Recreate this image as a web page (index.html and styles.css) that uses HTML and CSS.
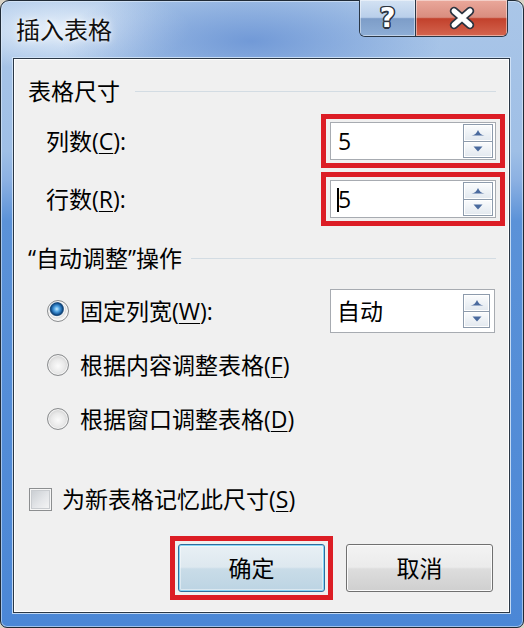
FILE: index.html
```html
<!DOCTYPE html>
<html lang="zh-CN">
<head>
<meta charset="utf-8">
<title>插入表格</title>
<link rel="stylesheet" href="styles.css">
</head>
<body>
<div class="window">
  <div class="titlebar">
    <div class="title">插入表格</div>
    <div class="caption-buttons">
      <div class="cap-btn help"><span class="help-glyph">?</span></div>
      <div class="cap-btn close">
        <svg class="close-icon" width="30" height="24" viewBox="0 0 30 24">
          <path d="M7 5 L23 19 M23 5 L7 19" stroke="#2b3440" stroke-width="8.5" stroke-linecap="round" fill="none"/>
          <path d="M7 5 L23 19 M23 5 L7 19" stroke="#ffffff" stroke-width="5" stroke-linecap="round" fill="none"/>
        </svg>
      </div>
    </div>
  </div>
  <div class="panel">
    <div class="group-head"><span>表格尺寸</span><i class="rule"></i></div>

    <div class="field-row first">
      <span class="label">列数(<u>C</u>):</span>
      <div class="mark">
        <div class="spin-field">
          <span class="value">5</span>
          <div class="spinner">
            <div class="spin"><svg width="14" height="7" viewBox="0 0 14 7"><path d="M0.5 6.5 Q5 6 7 1 Q9 6 13.5 6.5 Z" fill="#4a6a9e"/></svg></div>
            <div class="spin"><svg width="12" height="6" viewBox="0 0 12 6"><path d="M1.5 0.5 L10.5 0.5 L6 5.5 Z" fill="#4a6a9e"/></svg></div>
          </div>
        </div>
      </div>
    </div>

    <div class="field-row">
      <span class="label">行数(<u>R</u>):</span>
      <div class="mark">
        <div class="spin-field">
          <span class="value">5</span>
          <span class="caret"></span>
          <div class="spinner">
            <div class="spin"><svg width="14" height="7" viewBox="0 0 14 7"><path d="M0.5 6.5 Q5 6 7 1 Q9 6 13.5 6.5 Z" fill="#4a6a9e"/></svg></div>
            <div class="spin"><svg width="12" height="6" viewBox="0 0 12 6"><path d="M1.5 0.5 L10.5 0.5 L6 5.5 Z" fill="#4a6a9e"/></svg></div>
          </div>
        </div>
      </div>
    </div>

    <div class="group-head second"><span>“自动调整”操作</span><i class="rule"></i></div>

    <div class="option-row first">
      <span class="radio on"></span>
      <span class="label">固定列宽(<u>W</u>):</span>
      <div class="spin-field combo">
        <span class="value">自动</span>
        <div class="spinner">
          <div class="spin"><svg width="14" height="7" viewBox="0 0 14 7"><path d="M0.5 6.5 Q5 6 7 1 Q9 6 13.5 6.5 Z" fill="#4a6a9e"/></svg></div>
          <div class="spin"><svg width="12" height="6" viewBox="0 0 12 6"><path d="M1.5 0.5 L10.5 0.5 L6 5.5 Z" fill="#4a6a9e"/></svg></div>
        </div>
      </div>
    </div>

    <div class="option-row">
      <span class="radio"></span>
      <span class="label">根据内容调整表格(<u>F</u>)</span>
    </div>

    <div class="option-row">
      <span class="radio"></span>
      <span class="label">根据窗口调整表格(<u>D</u>)</span>
    </div>

    <div class="check-row">
      <span class="check"></span>
      <span class="label">为新表格记忆此尺寸(<u>S</u>)</span>
    </div>

    <div class="button-row">
      <div class="mark btn-mark"><div class="btn ok">确定</div></div>
      <div class="btn cancel">取消</div>
    </div>
  </div>
</div>
</body>
</html>
```

FILE: styles.css
```css
* { box-sizing: border-box; }

html, body {
  margin: 0;
  padding: 0;
}

body {
  width: 524px;
  height: 628px;
  background: #d9d3c6;
  font-family: "Open Sans", "Noto Sans CJK SC", sans-serif;
  color: #000;
  overflow: hidden;
}

.window {
  width: 524px;
  height: 628px;
  border: 1px solid #1f2a36;
  border-radius: 9px 9px 7px 7px;
  padding: 0 13px 14px 12px;
  display: flex;
  flex-direction: column;
  background:
    radial-gradient(ellipse 190px 60px at 250px 40px, rgba(104, 146, 212, 0.85), rgba(104, 146, 212, 0) 100%),
    radial-gradient(ellipse 130px 42px at 60px 28px, rgba(236, 244, 252, 0.9), rgba(236, 244, 252, 0) 100%),
    linear-gradient(to bottom, #aac6e8 0px, #9fbfe6 150px, #8bb0e2 180px, #5b92d8 220px, #4b87d6 100%);
  box-shadow: inset 0 0 0 1px rgba(230, 240, 252, 0.55);
}

/* Title bar */
.titlebar {
  height: 57px;
  display: flex;
  align-items: flex-start;
  justify-content: space-between;
}

.title {
  align-self: center;
  padding-left: 3px;
  margin-top: 1px;
  font-size: 24px;
  line-height: 30px;
  color: #111;
  text-shadow: 0 0 8px rgba(255, 255, 255, 0.9), 0 0 3px rgba(255, 255, 255, 0.8);
}

.caption-buttons {
  display: flex;
  height: 37px;
  margin-top: -1px;
  margin-right: 2px;
  border: 1px solid #2a3747;
  border-top: none;
  border-radius: 0 0 6px 6px;
  overflow: hidden;
}

.cap-btn {
  display: flex;
  align-items: center;
  justify-content: center;
  height: 100%;
  box-shadow: inset 0 0 0 1px rgba(255, 255, 255, 0.45);
}

.help {
  width: 56px;
  border-right: 1px solid #2a3747;
  background: linear-gradient(to bottom, #d3e2f3 0%, #b9cfea 48%, #7d9dc8 52%, #8eaed6 100%);
}

.help-glyph {
  font-family: "DejaVu Sans", sans-serif;
  font-weight: bold;
  font-size: 27px;
  line-height: 1;
  color: #fff;
  margin-top: -1px;
  text-shadow:
    1.5px 0 0 #2b3440, -1.5px 0 0 #2b3440, 0 1.5px 0 #2b3440, 0 -1.5px 0 #2b3440,
    1px 1px 0 #2b3440, -1px -1px 0 #2b3440, 1px -1px 0 #2b3440, -1px 1px 0 #2b3440;
}

.close {
  width: 91px;
  background: linear-gradient(to bottom, #eaa89b 0%, #d98d7f 48%, #c2412c 52%, #d4654f 100%);
}

.close-icon { display: block; margin-top: -1px; }

/* Content panel */
.panel {
  flex: 1;
  display: flex;
  flex-direction: column;
  padding: 19px 13px 12px 14px;
  background: #f0f0f0;
  border: 1px solid #2b3846;
  box-shadow: 0 0 0 1px rgba(214, 230, 248, 0.85), inset 0 0 0 1px #ffffff;
  font-size: 23px;
  line-height: 26px;
}

u { text-decoration-thickness: 1px; text-underline-offset: 3px; }

.group-head {
  height: 26px;
  display: flex;
  align-items: center;
}

.group-head .rule {
  flex: 1;
  height: 1px;
  margin-left: 15px;
  background: #d3dce3;
}

.group-head.second { margin-top: 19px; }
.group-head.second .rule { margin-left: 9px; }

.field-row {
  display: flex;
  align-items: center;
  justify-content: space-between;
  padding-left: 18px;
  margin-right: -9px;
  margin-top: 4px;
}

.field-row.first { margin-top: 10px; }

.mark {
  border: 5px solid #dc1d25;
  padding: 3px 4px;
}

.spin-field {
  position: relative;
  width: 166px;
  height: 38px;
  display: flex;
  align-items: center;
  padding: 0 2px 0 7px;
  background: #fff;
  border: 1px solid #a7abb1;
}

.spin-field .value {
  flex: 1;
  font-size: 23px;
  line-height: 26px;
}

.caret {
  position: absolute;
  left: 6px;
  top: 7px;
  width: 2px;
  height: 24px;
  background: #000;
}

.spinner {
  width: 30px;
  height: 34px;
  display: flex;
  flex-direction: column;
}

.spin {
  flex: 1;
  display: flex;
  align-items: center;
  justify-content: center;
  border: 1px solid #8d9bac;
  background: linear-gradient(to bottom, #fbfcfd 0%, #eef2f6 50%, #e2e8ef 100%);
  box-shadow: inset 0 0 0 1px #ffffff;
}

.spin + .spin { border-top: none; }

.combo {
  width: 165px;
  height: 44px;
  margin-left: auto;
  margin-right: 1px;
  padding-left: 6px;
  padding-right: 4px;
}

.combo .spinner { width: 27px; }

.option-row {
  height: 44px;
  display: flex;
  align-items: center;
  padding-left: 19px;
  margin-top: 10px;
}

.option-row.first { margin-top: 18px; }

.option-row .label { margin-left: 11px; }

.radio {
  width: 22px;
  height: 22px;
  flex: none;
  border-radius: 50%;
  border: 1px solid #8b8d8f;
  background: radial-gradient(circle at 50% 55%, #fbfbfb 0, #e9e9e9 45%, #cdcdcd 80%, #e8e8e8 100%);
  box-shadow: inset 0 0 0 1px rgba(255, 255, 255, 0.7);
}

.radio.on {
  background: radial-gradient(circle at 44% 40%, #c8ecff 0, #58a9e6 2.5px, #1d64a8 5px, #0f4377 6px, #2b5784 6.6px, #f6f6f6 7.6px, #dedede 9px, #f2f2f2 10px);
}

.check-row {
  height: 26px;
  display: flex;
  align-items: center;
  padding-left: 1px;
  margin-top: 45px;
}

.check {
  width: 23px;
  height: 23px;
  flex: none;
  margin-right: 10px;
  border: 1px solid #8c8e90;
  background: linear-gradient(135deg, #c6cacf 0%, #e4e6e9 55%, #f7f7f7 100%);
  box-shadow: inset 0 0 0 1px #f6f6f6, inset 0 0 0 2px #c9ccd0;
}

.button-row {
  display: flex;
  align-items: center;
  justify-content: flex-end;
  gap: 13px;
  padding-right: 3px;
  margin-top: 24px;
}

.btn-mark { padding: 3px; }

.btn {
  width: 147px;
  height: 48px;
  display: flex;
  align-items: center;
  justify-content: center;
  border-radius: 3px;
  font-size: 23px;
  line-height: 26px;
}

.ok {
  border: 1px solid #2f6d9d;
  background: linear-gradient(to bottom, #e8f0f5 0%, #dde8ef 48%, #c9dce8 52%, #bcd4e3 100%);
  box-shadow: inset 0 0 0 1px #86d5f6, inset 0 0 0 2px rgba(255, 255, 255, 0.45);
}

.cancel {
  border: 1px solid #707070;
  background: linear-gradient(to bottom, #f3f3f3 0%, #ebebeb 48%, #dddddd 52%, #cfcfcf 100%);
  box-shadow: inset 0 0 0 1px #fbfbfb;
}
```
